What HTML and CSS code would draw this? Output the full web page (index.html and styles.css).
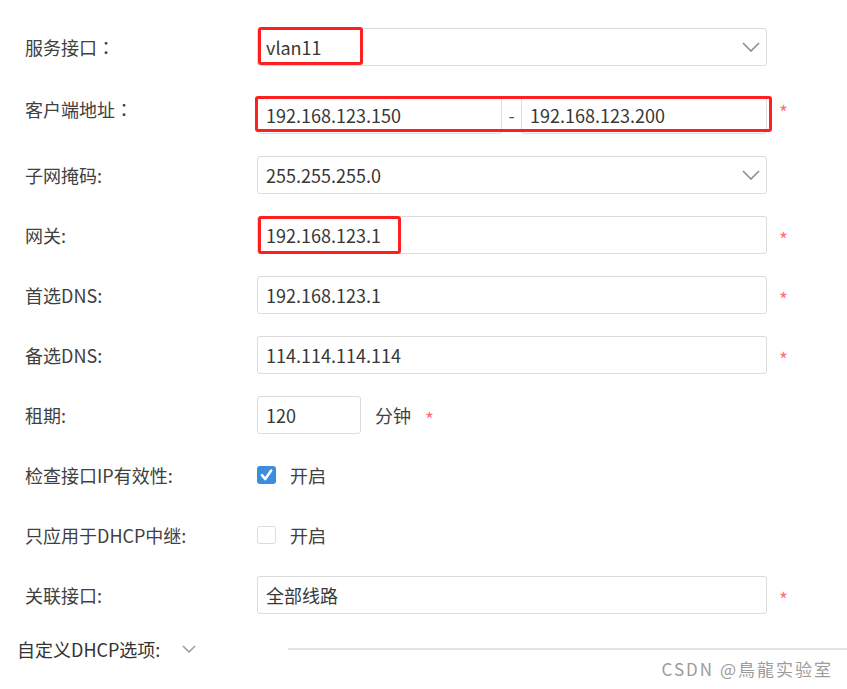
FILE: index.html
```html
<!DOCTYPE html>
<html lang="zh-CN">
<head>
<meta charset="utf-8">
<title>DHCP</title>
<link rel="stylesheet" href="styles.css">
</head>
<body>
<div class="page">
  <div class="form">
    <div class="row r1">
      <div class="lbl">服务接口<span class="fw" lang="ja">：</span></div>
      <div class="field select wide"><span>vlan11</span>
        <svg class="chev" width="18" height="10" viewBox="0 0 18 10"><path d="M1 1 L9 9 L17 1" fill="none" stroke="#8c8c8c" stroke-width="1.6"/></svg>
      </div>
    </div>
    <div class="row r2">
      <div class="lbl top">客户端地址<span class="fw" lang="ja">：</span></div>
      <div class="range">
        <div class="field half">192.168.123.150</div>
        <span class="dash">-</span>
        <div class="field half2">192.168.123.200</div>
      </div>
      <span class="req top">*</span>
    </div>
    <div class="row">
      <div class="lbl">子网掩码:</div>
      <div class="field select wide"><span>255.255.255.0</span>
        <svg class="chev" width="18" height="10" viewBox="0 0 18 10"><path d="M1 1 L9 9 L17 1" fill="none" stroke="#8c8c8c" stroke-width="1.6"/></svg>
      </div>
    </div>
    <div class="row">
      <div class="lbl">网关:</div>
      <div class="field wide">192.168.123.1</div>
      <span class="req">*</span>
    </div>
    <div class="row">
      <div class="lbl">首选DNS:</div>
      <div class="field wide">192.168.123.1</div>
      <span class="req">*</span>
    </div>
    <div class="row">
      <div class="lbl">备选DNS:</div>
      <div class="field wide">114.114.114.114</div>
      <span class="req">*</span>
    </div>
    <div class="row">
      <div class="lbl">租期:</div>
      <div class="field short">120</div>
      <span class="unit">分钟</span>
      <span class="req">*</span>
    </div>
    <div class="row">
      <div class="lbl">检查接口IP有效性:</div>
      <span class="cb on"><svg width="19" height="18" viewBox="0 0 19 18"><path d="M5 9.2 L8.2 13 L14.2 4.6" fill="none" stroke="#fff" stroke-width="2.6" stroke-linecap="round" stroke-linejoin="round"/></svg></span>
      <span class="cb-text">开启</span>
    </div>
    <div class="row">
      <div class="lbl">只应用于DHCP中继:</div>
      <span class="cb"></span>
      <span class="cb-text">开启</span>
    </div>
    <div class="row">
      <div class="lbl">关联接口:</div>
      <div class="field wide">全部线路</div>
      <span class="req">*</span>
    </div>
  </div>
  <div class="adv">
    <span class="adv-label">自定义DHCP选项:</span>
    <svg class="adv-chev" width="14" height="8" viewBox="0 0 14 8"><path d="M1 1 L7 7 L13 1" fill="none" stroke="#9a9a9a" stroke-width="1.5"/></svg>
    <span class="adv-line"></span>
  </div>

  <div class="mark m1"></div>
  <div class="mark m2"></div>
  <div class="mark m3"></div>
  <div class="watermark">CSDN @鳥龍实验室</div>
</div>
</body>
</html>
```

FILE: styles.css
```css
html, body {
  margin: 0;
  padding: 0;
  background: #fff;
}

.page {
  position: relative;
  width: 847px;
  height: 689px;
  overflow: hidden;
  font-family: "Noto Sans CJK SC", "Microsoft YaHei", sans-serif;
  color: #333;
}

.form {
  padding: 28px 0 0 25px;
}

.row {
  display: flex;
  align-items: center;
  height: 38px;
  margin-bottom: 22px;
}

.row.r1 {
  margin-bottom: 30px;
}

.row.r2 {
  align-items: flex-start;
}

.lbl {
  width: 232px;
  flex: none;
  font-size: 18px;
  color: #404040;
  line-height: 26px;
}

.fw {
  font-family: "Noto Sans CJK JP", "Noto Sans CJK SC", sans-serif;
}

.field {
  box-sizing: border-box;
  height: 38px;
  border: 1px solid #dcdcdc;
  border-radius: 3px;
  padding: 0 8px;
  display: flex;
  align-items: center;
  font-size: 18px;
  color: #383838;
  background: #fff;
  flex: none;
}

.wide {
  width: 510px;
}

.short {
  width: 104px;
}

.select {
  justify-content: space-between;
  padding-right: 6px;
}

.chev {
  display: block;
}

.range {
  display: flex;
  align-items: center;
}

.half {
  width: 245px;
}

.half2 {
  width: 246px;
}

.dash {
  width: 19px;
  text-align: center;
  font-size: 18px;
  color: #555;
}

.req {
  color: #ff7070;
  font-size: 19px;
  line-height: 19px;
  margin-left: 12px;
  padding-top: 7px;
}

.req.top {
  padding-top: 6px;
}

.unit {
  font-size: 18px;
  margin-left: 14px;
  color: #404040;
}

.unit + .req {
  margin-left: 14px;
}

.cb {
  box-sizing: border-box;
  width: 19px;
  height: 18px;
  border: 1px solid #dcdcdc;
  border-radius: 3px;
  flex: none;
  background: #fff;
  display: block;
}

.cb.on {
  background: #3d8ddd;
  border: none;
}

.cb svg {
  display: block;
}

.cb-text {
  font-size: 18px;
  margin-left: 14px;
  color: #404040;
}

.adv {
  display: flex;
  align-items: center;
  height: 26px;
  padding-left: 17px;
}

.adv-label {
  width: 165px;
  font-size: 18px;
  color: #333;
  white-space: nowrap;
}

.adv-chev {
  display: block;
  flex: none;
}

.adv-line {
  flex: 1;
  height: 2px;
  background: #e4e4e4;
  margin-left: 92px;
}

.mark {
  position: absolute;
  box-sizing: border-box;
  border: 3px solid #ff1f1f;
  border-radius: 3px;
}

.m1 {
  left: 258px;
  top: 27px;
  width: 105px;
  height: 38px;
}

.m2 {
  left: 255px;
  top: 96px;
  width: 517px;
  height: 36px;
}

.m3 {
  left: 258px;
  top: 216px;
  width: 143px;
  height: 38px;
}

.watermark {
  position: absolute;
  right: 14px;
  top: 656px;
  font-size: 17px;
  letter-spacing: 2px;
  color: #9c9c9c;
  font-family: "Noto Sans CJK SC", sans-serif;
}
```
